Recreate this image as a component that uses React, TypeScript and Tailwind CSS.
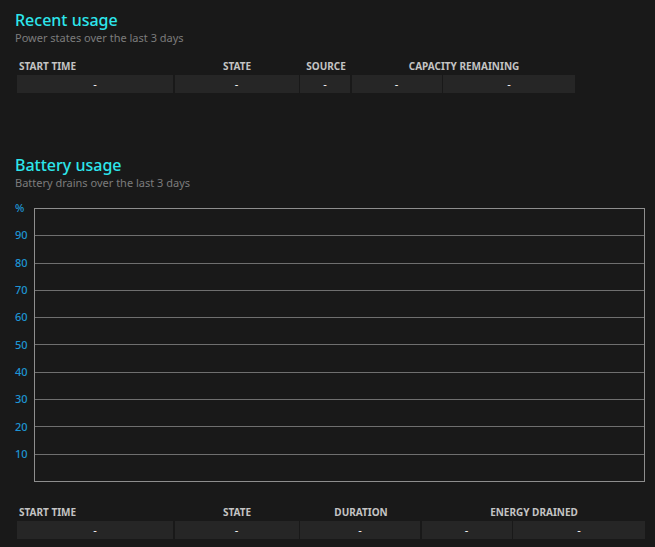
const font = { fontFamily: '"Noto Sans", "Open Sans", sans-serif' }

function UsageTable({ cols, heads }: { cols: string[]; heads: { label: string; w: string; left?: boolean }[] }) {
  return (
    <div className="ml-[17px]">
      <div className="flex h-[14px] items-end">
        {heads.map((h, i) => (
          <div
            key={i}
            className={`${h.w} ${h.left ? "pl-[2px] text-left" : "text-center"} text-[10px] font-bold leading-none text-[#c4c4c4]`}
          >
            {h.label}
          </div>
        ))}
      </div>
      <div className="mt-[4px] flex gap-[1.5px]">
        {cols.map((w, i) => (
          <div key={i} className={`${w} flex h-[18px] items-center justify-center bg-[#262626] text-[11px] text-white`}>
            -
          </div>
        ))}
      </div>
    </div>
  )
}

const ticks = [90, 80, 70, 60, 50, 40, 30, 20, 10]

export default function App() {
  return (
    <main className="h-[547px] w-[655px] overflow-hidden bg-[#191919]" style={font}>
      {/* Recent usage */}
      <section className="pt-[9px]">
        <h2 className="ml-[15px] text-[16px] font-medium leading-[22px] text-[#2de6ec]">Recent usage</h2>
        <p className="ml-[15px] text-[11px] leading-[14px] text-[#7c7c7c]">Power states over the last 3 days</p>
        <div className="mt-[12px]">
          <UsageTable
            cols={["w-[156px]", "w-[124px]", "w-[50px]", "w-[90px]", "w-[132px]"]}
            heads={[
              { label: "START TIME", w: "w-[157px]", left: true },
              { label: "STATE", w: "w-[126px]" },
              { label: "SOURCE", w: "w-[52px]" },
              { label: "CAPACITY REMAINING", w: "w-[224px]" },
            ]}
          />
        </div>
      </section>

      {/* Battery usage */}
      <section className="mt-[61px]">
        <h2 className="ml-[15px] text-[16px] font-medium leading-[22px] text-[#2de6ec]">Battery usage</h2>
        <p className="ml-[15px] text-[11px] leading-[14px] text-[#7c7c7c]">Battery drains over the last 3 days</p>

        <div className="mt-[18px] flex">
          <div className="flex w-[34px] -translate-y-[13.65px] flex-col pl-[15px] text-[11px] font-medium leading-none text-[#1e95d4]">
            <div className="flex h-[27.3px] items-center">%</div>
            {ticks.map((t) => (
              <div key={t} className="flex h-[27.3px] items-center">
                {t}
              </div>
            ))}
          </div>
          <div className="flex h-[274px] w-[611px] flex-col border border-[#8e8e8e]">
            {ticks.map((t) => (
              <div key={t} className="h-[27.3px] shrink-0 border-b border-[#6f6f6f]" />
            ))}
          </div>
        </div>

        <div className="mt-[21px]">
          <UsageTable
            cols={["w-[156px]", "w-[124px]", "w-[120px]", "w-[90px]", "w-[132px]"]}
            heads={[
              { label: "START TIME", w: "w-[157px]", left: true },
              { label: "STATE", w: "w-[126px]" },
              { label: "DURATION", w: "w-[122px]" },
              { label: "ENERGY DRAINED", w: "w-[224px]" },
            ]}
          />
        </div>
      </section>
    </main>
  )
}
